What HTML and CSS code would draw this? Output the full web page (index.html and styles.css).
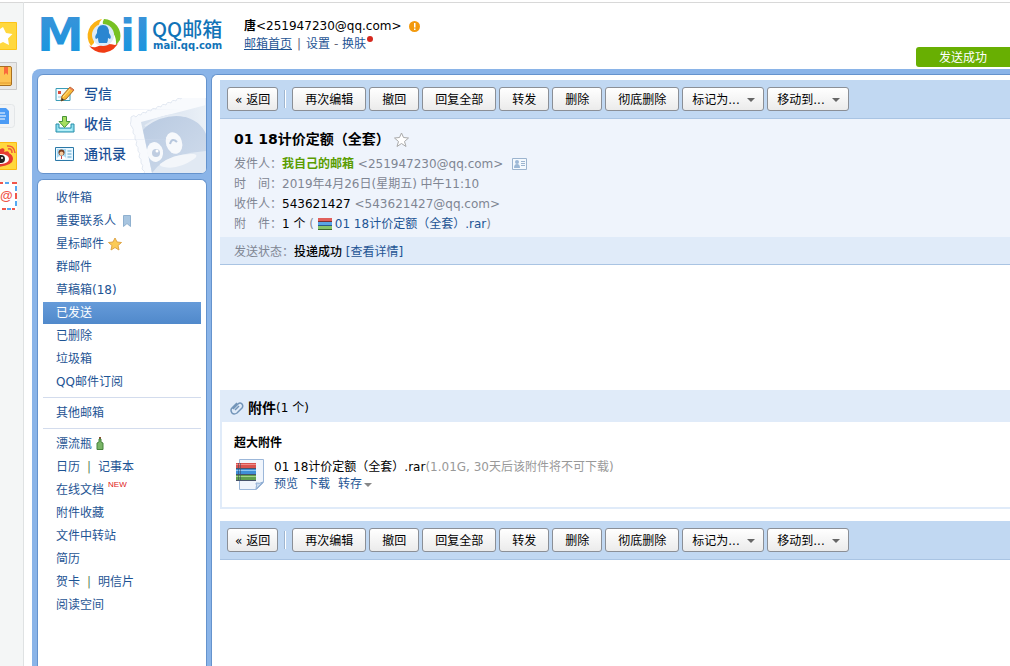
FILE: index.html
```html
<!DOCTYPE html>
<html lang="zh-CN">
<head>
<meta charset="utf-8">
<title>QQ邮箱</title>
<link rel="stylesheet" href="styles.css">
</head>
<body>
<svg class="defs" aria-hidden="true">
  <defs>
    <linearGradient id="blue" x1="0" y1="0" x2="0" y2="1"><stop offset="0" stop-color="#3f93d8"/><stop offset="1" stop-color="#1296e0"/></linearGradient>
    <linearGradient id="stampFill" x1="0" y1="0" x2="1" y2="0"><stop offset="0" stop-color="#d3deec"/><stop offset="1" stop-color="#eaf0f7"/></linearGradient>
    <linearGradient id="penguin" x1="0" y1="0" x2="1" y2="1"><stop offset="0" stop-color="#b9cae1"/><stop offset="1" stop-color="#d0dcec"/></linearGradient>
    <symbol id="books" viewBox="0 0 20 18">
      <path d="M0 0h20v5H0z" fill="#d9534f"/><path d="M0 1h20v1H0z" fill="#f08b88"/>
      <path d="M0 6h20v5H0z" fill="#3f8fd6"/><path d="M0 7h20v1H0z" fill="#8cc6f4"/>
      <path d="M0 12h20v5H0z" fill="#5fa04e"/><path d="M0 13h20v1H0z" fill="#a6d48c"/>
      <path d="M2 0h1v17H2zM4 0h1v17H4z" fill="#33415c" opacity=".5"/><path d="M0 5h20v1H0zM0 11h20v1H0zM0 17h20v1H0z" fill="#47536b"/>
    </symbol>
    <symbol id="books-small" viewBox="0 0 14 12">
      <path d="M0 0h14v3H0z" fill="#e0605c"/><path d="M0 3h14v1H0z" fill="#7a3034"/>
      <path d="M0 4h14v3H0z" fill="#5aa5e6"/><path d="M0 7h14v1H0z" fill="#27598f"/>
      <path d="M0 8h14v3H0z" fill="#86c46a"/><path d="M0 11h14v1H0z" fill="#3c6b2e"/>
    </symbol>
  </defs>
</svg>
<div class="page">
  <aside class="rail" aria-label="快捷方式">
    <a href="#" aria-label="收藏"><svg width="17" height="28"><path d="M-1 .5h17.500v27H-1z" fill="#ffd83e" stroke="#fcc419"/><path d="M3 5l3 6 6.500 1-4.500 4.500 1 6.500-6-3-6 3V9z" fill="#fff"/></svg></a>
    <a href="#" aria-label="笔记"><svg width="17" height="28"><path d="M-1 .5h17.500v27H-1z" fill="#e9e9e9" stroke="#c9c9c9"/><path d="M-1 4.500H10q1.500 0 1.500 1.500v16q0 1.500-1.500 1.500H-1z" fill="#fdc453" stroke="#a86f20"/><path d="M-1 21h12" stroke="#e29a2c"/><path d="M4 5h4v8l-2-2-2 2z" fill="#fa6a3c"/></svg></a>
    <a href="#" aria-label="文档"><svg width="17" height="28"><rect x="-8" y="2.500" width="22.500" height="23" rx="3" fill="#f2f4f5" stroke="#e3e6e8"/><path d="M-1 6h7l3 3v13H-1z" fill="#4b9bf5"/><path d="M0 11h5M0 14h6M0 17h5" stroke="#fff"/></svg></a>
    <a href="#" aria-label="微博"><svg width="17" height="28"><path d="M-1 .5h17.500v27H-1z" fill="#ffd83e" stroke="#fcb913"/><path d="M-1 8q4-3 5-1 1 1 0 3 5-2 5 1 4 2 4 6 0 6-14 8z" fill="#e63c32"/><ellipse cx="1" cy="17" rx="8" ry="5" fill="#fff"/><circle cx="1" cy="17" r="4" fill="#222"/><circle cx="2" cy="16" r="1" fill="#fff"/><path d="M7 4q7-1 8 7M8 7q4-1 4 4" fill="none" stroke="#f15a3a" stroke-width="1.500"/></svg></a>
    <a href="#" aria-label="邮箱"><svg width="17" height="28"><path d="M-1 0h18v28H-1z" fill="#fff"/><path d="M0 1h3M12 1h5M2 27h4M12 27h3M16 11v6" stroke="#f0564a" stroke-width="2"/><path d="M5 1h4M7 27h4M16 4v5M16 19v5" stroke="#55a9f2" stroke-width="2"/><text x="0" y="18" class="at">@</text></svg></a>
  </aside>

  <div class="app">
    <header class="top">
      <a class="logo" href="#" aria-label="QQ邮箱">
        <svg width="186" height="44" viewBox="0 0 186 44">
          <text x="-3" y="37" class="logo-m">M</text>
          <circle cx="63" cy="22" r="19" fill="#fff"/>
          <path d="M64 5a17 17 0 0 1 16 21l-4 5q1-14-13-20-1-3 1-6z" fill="#78c123"/>
          <path d="M79 27a17 17 0 0 1-31 3q3 4 8 3 10-5 19-2 3-1 4-4z" fill="#f03c14"/>
          <path d="M62 5q-3 3-3 6-6 7-5 18l-3 3A17 17 0 0 1 62 5z" fill="#fbb215"/>
          <circle cx="63" cy="21" r="11" fill="#dcebf8"/>
          <path d="M63 11q6 0 6 8 3 4 1 6l-2-1q0 3-1 5h-8q-1-2-1-5l-2 1q-2-2 1-6 0-8 6-8z" fill="#2a86d1"/>
          <text x="80" y="37" class="logo-il">i</text><text x="95" y="37" class="logo-il">l</text>
          <text x="112" y="23" class="logo-name">QQ邮箱</text>
          <text x="113" y="35" class="logo-host">mail.qq.com</text>
        </svg>
      </a>
      <div class="account">
        <div class="who"><b>唐</b>&lt;251947230@qq.com&gt;<svg class="warn" width="11" height="11"><circle cx="5.500" cy="5.500" r="5.500" fill="#f39a0e"/><path d="M5 2h1.500v4.500H5zM5 7.500h1.500V9H5z" fill="#fff"/></svg></div>
        <div class="links"><a class="home" href="#">邮箱首页</a><span class="bar">|</span><a href="#">设置</a> - <a href="#">换肤</a><i class="dot"></i></div>
      </div>
      <div class="toast" role="status">发送成功</div>
    </header>

    <div class="frame">
      <div class="side">
        <nav class="card actions" aria-label="写信和收信">
          <svg class="stamp" width="76" height="75" viewBox="0 0 76 75">
            <path d="M1 19q3-3 5 0 2-4 5-2 1-4 5-2 1-4 5-2 1-4 5-2 1-4 5-2 1-4 5-2 1-4 5-2 1-4 5-2 1-4 5-2 1-4 5-2 1-4 5-2 1-4 5-2 1-4 5-1 1-3 5-1v84H14q2-4-2-6 2-4-1-6 1-4-2-6 2-4-1-6 1-4-2-6 2-4-1-6 1-4-2-6 1-4-1-6-3-2-1-6z" fill="#f8fafd" stroke="#e2e8f1"/>
            <path d="M11 24L76 7v68H22z" fill="url(#stampFill)"/>
            <path d="M13 32Q30 13 52 18q18 4 24 18v39H22z" fill="url(#penguin)"/>
            <path d="M15 28Q35 14 55 18" fill="none" stroke="#e4ebf4" stroke-width="2"/>
            <path d="M22 75q8-12 25-17 14-4 29-5v22z" fill="#e1e9f3"/>
            <path d="M30 66q14-11 34-10 5 1 0 5-16 11-30 8-5-1-4-3z" fill="#f3f6fa"/>
            <ellipse cx="25" cy="54" rx="8" ry="10" transform="rotate(-12 25 54)" fill="#f7f9fc"/><ellipse cx="44" cy="45" rx="8" ry="11" transform="rotate(-18 44 45)" fill="#f7f9fc"/>
            <circle cx="26" cy="55" r="4" fill="#bfcde1"/><circle cx="27" cy="53" r="1.500" fill="#fff"/><path d="M40 46q2-7 7-2" fill="none" stroke="#b8c8de" stroke-width="2"/>
          </svg>
          <a href="#"><svg width="20" height="18"><path d="M1 3.500h14v12H1z" fill="#f3fbff" stroke="#3c9db7"/><path d="M3 6h3v3H3z" fill="#d94b3c"/><path d="M3 12h5" stroke="#9cc8dc"/><path d="M6 16l1-5 8-9 4 3-8 9z" fill="#f9b938" stroke="#a56b20"/><path d="M8 12l8-9" stroke="#ffe48c"/><path d="M15 2l4 3-1 1-4-3z" fill="#e9765b"/><path d="M6 16l1-3 2 2z" fill="#333"/></svg>写信</a>
          <a href="#"><svg width="20" height="18"><path d="M1 9h3v4h12V9h3v8H1z" fill="#8fe0ef" stroke="#278eaa"/><path d="M3 15h14" stroke="#d8fbff"/><path d="M7.500 1.500h4v5h3.500l-5.500 6-5.500-6h3.500z" fill="#a6df5f" stroke="#48933a"/></svg>收信</a>
          <a href="#"><svg width="20" height="18"><path d="M.5 2.500h18v13H.5z" fill="#e9f7ff" stroke="#2b78a7"/><path d="M2 4h9v10H2z" fill="#a9d8f2"/><circle cx="6.500" cy="7.500" r="3" fill="#743e22"/><circle cx="6.500" cy="8.500" r="2" fill="#f7c99c"/><path d="M2 14q0-3 4.500-3t4.500 3z" fill="#fff"/><path d="M6 11h1v3H6z" fill="#c44"/><path d="M12.500 6h4M12.500 9h4M12.500 12h4" stroke="#5aa0c8"/></svg>通讯录</a>
        </nav>
        <nav class="card folders" aria-label="文件夹">
          <ul>
            <li><a href="#">收件箱</a></li>
            <li><a href="#">重要联系人</a><svg width="10" height="12"><path d="M1.500.5h7v11L5 8.500l-3.500 3z" fill="#a8c5e0" stroke="#8fb0cf"/></svg></li>
            <li><a href="#">星标邮件</a><svg class="near" width="14" height="14"><path d="M7 1l2 4 4.500.5-3.500 3 1 4.500-4-2.500L3 13l1-4.500-3.500-3L5 5z" fill="#fbcb55" stroke="#dfa545"/></svg></li>
            <li><a href="#">群邮件</a></li>
            <li><a href="#">草稿箱(18)</a></li>
            <li class="on"><a href="#" aria-current="page">已发送</a></li>
            <li><a href="#">已删除</a></li>
            <li><a href="#">垃圾箱</a></li>
            <li><a href="#">QQ邮件订阅</a></li>
          </ul>
          <ul>
            <li><a href="#">其他邮箱</a></li>
          </ul>
          <ul>
            <li><a href="#">漂流瓶</a><svg class="near" width="8" height="13"><path d="M3 0h2v2H3z" fill="#8a4b2c"/><path d="M3 2h2v3l2 1v6.500H1V6l2-1z" fill="#79b566" stroke="#47833c"/></svg></li>
            <li><a href="#">日历</a><span class="sep">|</span><a href="#">记事本</a></li>
            <li><a href="#">在线文档</a><sup>NEW</sup></li>
            <li><a href="#">附件收藏</a></li>
            <li><a href="#">文件中转站</a></li>
            <li><a href="#">简历</a></li>
            <li><a href="#">贺卡</a><span class="sep">|</span><a href="#">明信片</a></li>
            <li><a href="#">阅读空间</a></li>
          </ul>
        </nav>
      </div>

      <main class="mail">
        <div class="toolbar">
          <button class="back" type="button">« 返回</button><span class="rule"></span>
          <button type="button">再次编辑</button><button type="button">撤回</button><button type="button">回复全部</button><button type="button">转发</button><button type="button">删除</button><button type="button">彻底删除</button>
          <span class="pick"><select aria-label="标记为"><option>标记为...</option></select></span><span class="pick"><select aria-label="移动到"><option>移动到...</option></select></span>
        </div>
        <section class="head">
          <h1>01 18计价定额（全套）<svg width="15" height="15"><path d="M7.500 1l2 4.500 5 .5-4 3.500 1.500 5-4.500-3-4.500 3 1.500-5-4-3.500 5-.5z" fill="#fff" stroke="#a9a9a9"/></svg></h1>
          <p>发件人：<b class="me">我自己的邮箱</b> &lt;251947230@qq.com&gt;<svg class="vcard" width="15" height="12"><path d="M.5.5h14v11H.5z" fill="#f4f9fe" stroke="#9cb4cf"/><circle cx="5" cy="4" r="2" fill="#9cb8d6"/><path d="M2 10q0-4 3-4t3 4z" fill="#9cb8d6"/><path d="M9 3.500h4M9 5.500h4M9 7.500h4" stroke="#9cb4cf"/></svg></p>
          <p>时　间：2019年4月26日(星期五) 中午11:10</p>
          <p>收件人：<span class="strong">543621427</span> &lt;543621427@qq.com&gt;</p>
          <p>附　件：<span class="strong">1 个</span> ( <svg class="rar" width="14" height="12"><use href="#books-small" width="14" height="12"/></svg><a href="#">01 18计价定额（全套）.rar</a>)</p>
        </section>
        <div class="state">发送状态：<b>投递成功</b> <a href="#">[查看详情]</a></div>
        <div class="body"></div>
        <section class="files">
          <h2><svg width="14" height="14"><path d="M3 8l5-5q2-2 4 0 1.500 2 0 4l-5 5q-3 2-5 0-2-3 0-5l5-5M5 9l4-4" fill="none" stroke="#7395b9" stroke-width="1.500"/></svg>附件<span>(1 个)</span></h2>
          <div class="files-body">
            <h3>超大附件</h3>
            <div class="file">
              <svg width="29" height="31"><path d="M3.500.5h24v23l-7 7h-17z" fill="#f0f5fc" stroke="#9cb7d9"/><path d="M27 23l-7 7q1-4 0-6 4 1 7-1z" fill="#cbdcf0" stroke="#8fadd2"/><use href="#books" y="4" width="20" height="18"/></svg>
              <div>
                <div class="fname">01 18计价定额（全套）.rar<span>(1.01G, 30天后该附件将不可下载)</span></div>
                <div class="ops"><a href="#">预览</a><a href="#">下载</a><a href="#">转存<i class="caret"></i></a></div>
              </div>
            </div>
          </div>
        </section>
        <div class="toolbar">
          <button class="back" type="button">« 返回</button><span class="rule"></span>
          <button type="button">再次编辑</button><button type="button">撤回</button><button type="button">回复全部</button><button type="button">转发</button><button type="button">删除</button><button type="button">彻底删除</button>
          <span class="pick"><select aria-label="标记为"><option>标记为...</option></select></span><span class="pick"><select aria-label="移动到"><option>移动到...</option></select></span>
        </div>
      </main>
    </div>
  </div>
</div>
</body>
</html>
```
FILE: styles.css
```css
* { box-sizing: border-box; }
body, h1, h2, h3, p, ul { margin: 0; padding: 0; }
body, button, select {
  font: 12px/20px "DejaVu Sans", "Noto Sans CJK SC", sans-serif;
}
body { color: #000; background: #fff; overflow: hidden; }
a { color: #1e5494; text-decoration: none; }
ul { list-style: none; }
svg { flex: none; }
.defs { position: absolute; width: 0; height: 0; }

.page { display: flex; min-height: 100vh; border-top: 2px solid #fff; box-shadow: inset 0 1px #d8d8d8; }
.rail {
  flex: none; width: 24px; padding-top: 20px;
  display: flex; flex-direction: column; gap: 12px;
  background: #f4f6f6; border-right: 1px solid #dfe2e3; box-shadow: inset 0 1px #d8d8d8;
}
.rail a, .rail svg { display: block; height: 28px; }
.at { font: bold 13px "Liberation Sans", sans-serif; fill: #f0564a; }

.app { flex: 1; min-width: 0; display: flex; flex-direction: column; padding-left: 8px; }
.top { display: flex; height: 67px; flex: none; }
.logo { margin: 12px 18px 0 8px; }
.logo svg { display: block; overflow: visible; }
.logo-m { font: bold 47px "DejaVu Sans", sans-serif; fill: url(#blue); }
.logo-il { font: bold 44px "DejaVu Sans", sans-serif; fill: url(#blue); }
.logo-name { font: 500 20px "Noto Sans CJK SC", sans-serif; fill: #1173b8; }
.logo-host { font: bold 10px "DejaVu Sans", sans-serif; fill: #1173b8; }
.account { padding-top: 15px; line-height: 18px; white-space: nowrap; }
.who { display: flex; align-items: center; }
.warn { margin-left: 7px; }
.links { color: #667; }
.home { text-decoration: underline; }
.bar { margin: 0 5px; }
.dot { display: inline-block; width: 6px; height: 6px; margin-left: 1px; border-radius: 3px; background: #d5281e; vertical-align: 6px; }
.toast {
  flex: none; align-self: flex-end; width: 94px; height: 20px; margin: 0 0 2px auto; padding-top: 1px;
  border-radius: 3px 0 0 3px; background: #68af02; color: #fff; text-align: center;
}

.frame {
  flex: 1; display: flex; gap: 4px; padding: 5px 0 0 5px;
  background: #8ab4e8; border-radius: 8px 0 0 0;
}
.side { flex: none; width: 170px; display: flex; flex-direction: column; gap: 5px; }
.card { background: #fff; border: 1px solid #6593cd; border-radius: 6px; }
.actions { position: relative; padding: 4px 0 4px 10px; overflow: hidden; }
.actions a {
  position: relative; display: flex; align-items: center; gap: 9px; height: 30px; padding-left: 7px;
  font-size: 14px; font-weight: 500; color: #1a4f96;
}
.actions a + a { background: linear-gradient(90deg, #d4deef, #fff0 85%) top / 100% 1px no-repeat; }
.stamp { position: absolute; right: 0; bottom: 0; }
.folders { flex: 1; padding: 6px 5px; border-bottom: 0; border-radius: 6px 6px 0 0; }
.folders ul + ul { border-top: 1px solid #d3dced; margin-top: 4px; padding-top: 3px; }
.folders li { display: flex; align-items: center; height: 23px; padding-left: 13px; white-space: nowrap; }
.folders svg { margin-left: 6px; }
.folders .near { margin-left: 4px; }
.folders .on { height: 22px; margin-top: 1px; background: linear-gradient(#669bd9, #5089cb); }
.on a { color: #fff; }
.sep { margin: 0 7px; color: #5a8a5a; }
sup { align-self: flex-start; margin-left: 4px; font: 8px/14px "Liberation Sans", sans-serif; color: #e02020; }

.mail {
  flex: 1; min-width: 0; padding: 5px 0 0 8px; background: #fff;
  border: solid #6593cd; border-width: 1px 0 0 1px; border-radius: 6px 0 0 0;
}
.toolbar {
  display: flex; align-items: center; gap: 3px; height: 39px; padding-left: 7px;
  background: #c1d8f2; border-bottom: 1px solid #a9c4e3;
}
.toolbar button, .toolbar select {
  height: 24px; padding: 2px 12px 0; border: 1px solid #8b8f96; border-radius: 3px;
  background: linear-gradient(#fff, #ebebeb); color: #000; white-space: nowrap;
}
.toolbar .back { padding: 2px 7px 0; }
.rule { width: 2px; height: 18px; margin: 0 3px; background: #fff; border-left: 1px solid #9fb6d0; }
.pick { position: relative; }
.toolbar .pick select { display: block; width: 82px; padding: 2px 9px 0; appearance: none; }
.pick::after, .caret { border: 4px solid transparent; border-top-color: #666; border-bottom: 0; }
.pick::after { content: ""; position: absolute; right: 9px; top: 11px; pointer-events: none; }

.head { padding: 8px 14px 3px; background: #eff4fc; color: #7f8693; white-space: nowrap; }
.head h1 { display: flex; align-items: center; gap: 4px; margin-bottom: 2px; font-size: 14px; line-height: 25px; color: #000; }
.head p { line-height: 20px; }
.me { color: #5a9d00; }
.strong { color: #000; }
.vcard { margin-left: 9px; vertical-align: -2px; }
.rar { margin-right: 3px; vertical-align: -2px; }
.state { height: 28px; padding: 1px 14px 0; line-height: 28px; background: #e0ebf9; border-bottom: 1px solid #a9c4e3; color: #7f8693; }
.state b { font-weight: 500; color: #000; }
.body { height: 125px; }

.files { border: 2px solid #e0ebf9; border-top: 0; border-right: 0; margin-bottom: 12px; }
.files h2 { display: flex; align-items: center; height: 32px; padding: 4px 0 0 8px; background: #e0ebf9; font-size: 14px; }
.files h2 svg { margin-right: 4px; }
.files h2 span { font-size: 12px; font-weight: 400; }
.files-body { padding: 11px 12px 14px; }
.files h3 { font-size: 12px; }
.file { display: flex; gap: 9px; padding: 6px 2px 0; }
.fname { line-height: 16px; white-space: nowrap; }
.fname span { color: #999; }
.ops { display: flex; gap: 8px; line-height: 18px; }
.caret { display: inline-block; margin-left: 2px; border-top-color: #888; vertical-align: 1px; }
```
